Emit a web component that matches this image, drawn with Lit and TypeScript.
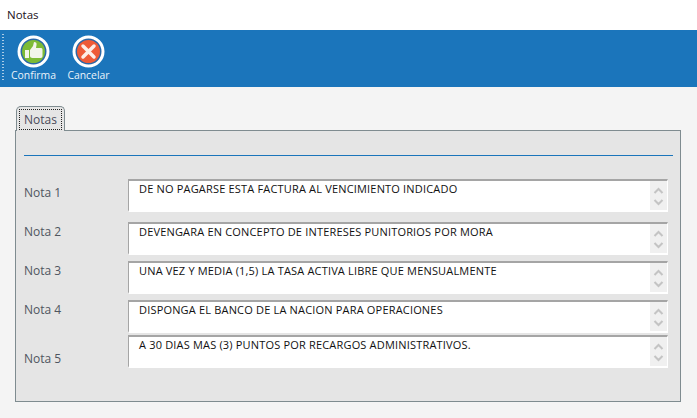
import { LitElement, html, css } from "lit";
import { customElement } from "lit/decorators.js";

const NOTES = [
  { label: "Nota 1", text: "DE NO PAGARSE ESTA FACTURA AL VENCIMIENTO INDICADO", gap: 0, lab: 6, ind: 10 },
  { label: "Nota 2", text: "DEVENGARA EN CONCEPTO DE INTERESES PUNITORIOS POR MORA", gap: 10, lab: 2, ind: 10 },
  { label: "Nota 3", text: "UNA VEZ Y MEDIA (1,5) LA TASA ACTIVA LIBRE QUE MENSUALMENTE", gap: 6, lab: 2, ind: 10 },
  { label: "Nota 4", text: "DISPONGA EL BANCO DE LA NACION PARA OPERACIONES", gap: 6, lab: 2, ind: 10 },
  { label: "Nota 5", text: "A 30 DIAS MAS (3) PUNTOS POR RECARGOS ADMINISTRATIVOS.", gap: 2, lab: 16, ind: 10 },
];

@customElement("app-root")
export class AppRoot extends LitElement {
  static styles = css`
    :host {
      display: block;
      width: 697px;
      height: 418px;
      background: #f4f4f4;
      font-family: "Open Sans", "Noto Sans", sans-serif;
      font-size: 12px;
      overflow: hidden;
    }
    .title {
      height: 30px;
      background: #fff;
      color: #1a1020;
      display: flex;
      align-items: center;
      padding-left: 7px;
      padding-bottom: 1px;
      box-sizing: border-box;
      font-size: 11.5px;
    }
    .toolbar {
      height: 57px;
      background: #1b75bb;
      display: flex;
      position: relative;
      padding: 5px 0 0 11px;
      box-sizing: border-box;
      gap: 10px;
    }
    .grip {
      position: absolute;
      left: 2px;
      top: 4px;
      bottom: 6px;
      width: 2px;
      background-image: linear-gradient(#a9cbe6 50%, transparent 50%);
      background-size: 2px 3px;
    }
    .tool {
      display: flex;
      flex-direction: column;
      align-items: center;
      color: #eaf3fa;
      font-size: 10.4px;
      line-height: 14px;
      width: 45px;
    }
    .tool svg { display: block; }
    .main { padding: 19px 16px 0 15px; }
    .tab {
      margin-left: 1px;
      width: 49px;
      height: 25px;
      box-sizing: border-box;
      border: 1px solid #7f8c90;
      border-bottom: none;
      border-radius: 5px 5px 0 0;
      background: #e5e5e5;
      padding: 2px 2px 0;
      position: relative;
      z-index: 1;
      margin-bottom: -1px;
    }
    .tab span {
      display: block;
      height: 21px;
      box-sizing: border-box;
      border: 1px dotted #222;
      color: #4a4a5a;
      text-align: center;
      font-size: 12px;
      line-height: 19px;
    }
    .panel {
      height: 272px;
      box-sizing: border-box;
      border: 1px solid #7f8c90;
      background: #e5e5e5;
      padding: 24px 7px 0 8px;
    }
    .rule { height: 1px; background: #1b75bb; margin-bottom: 23px; }
    .row { display: flex; }
    .lab {
      width: 104px;
      color: #4f5560;
      font-size: 12px;
      line-height: 16px;
      flex: none;
    }
    .box {
      width: 540px;
      height: 33px;
      box-sizing: border-box;
      display: flex;
      background: #fff;
      border-top: 2px solid #a5a5a5;
      border-left: 1px solid #a5a5a5;
      border-right: 1px solid #fff;
      border-bottom: 2px solid #fff;
      color: #111;
      font-size: 11px;
      letter-spacing: 0.18px;
      line-height: 13px;
    }
    .box p { flex: 1; margin: 0; white-space: nowrap; padding-top: 1px; }
    .scroll {
      width: 17px;
      background: #f0f0f0;
      display: flex;
      flex-direction: column;
      justify-content: space-between;
      align-items: center;
      padding: 6px 0 4px;
      box-sizing: border-box;
      flex: none;
    }
    .scroll svg { display: block; }
  `;

  render() {
    return html`
      <div class="title">Notas</div>
      <div class="toolbar">
        <div class="grip"></div>
        <div class="tool">
          <svg width="33" height="33" viewBox="0 0 33 33">
            <circle cx="16.5" cy="16.5" r="14.5" fill="#2a68a8" stroke="#fff" stroke-width="3"/>
            <circle cx="16.5" cy="16.5" r="11.5" fill="#7dbb35"/>
            <path d="M8 15h4v8H8z M13 15l3-4 1-4c2 0 3 1 2.500 3l-.5 3h5c1.500 0 1.500 1 1.500 2v6c0 1-.5 2-2 2h-8c-1.500 0-2.500-1-2.500-2z" fill="#f2f5ea"/>
          </svg>
          Confirma
        </div>
        <div class="tool">
          <svg width="33" height="33" viewBox="0 0 33 33">
            <circle cx="16.500" cy="16.500" r="14.500" fill="#2a68a8" stroke="#fff" stroke-width="3"/>
            <circle cx="16.500" cy="16.500" r="11.500" fill="#ee5b38"/>
            <path d="M11 11l11 11M22 11L11 22" stroke="#fdeee8" stroke-width="3.500" stroke-linecap="round"/>
          </svg>
          Cancelar
        </div>
      </div>
      <div class="main">
        <div class="tab"><span>Notas</span></div>
        <div class="panel">
          <div class="rule"></div>
          ${NOTES.map(
            (n) => html`
              <div class="row" style="margin-top:${n.gap}px">
                <div class="lab" style="padding-top:${n.lab}px">${n.label}</div>
                <div class="box">
                  <p style="padding-left:${n.ind}px">${n.text}</p>
                  <div class="scroll">
                    <svg width="11" height="7" viewBox="0 0 11 7"><path d="M1.500 6l4-4 4 4" fill="none" stroke="#c4c4c4" stroke-width="2"/></svg>
                    <svg width="11" height="7" viewBox="0 0 11 7"><path d="M1.500 1l4 4 4-4" fill="none" stroke="#c4c4c4" stroke-width="2"/></svg>
                  </div>
                </div>
              </div>
            `
          )}
        </div>
      </div>
    `;
  }
}
